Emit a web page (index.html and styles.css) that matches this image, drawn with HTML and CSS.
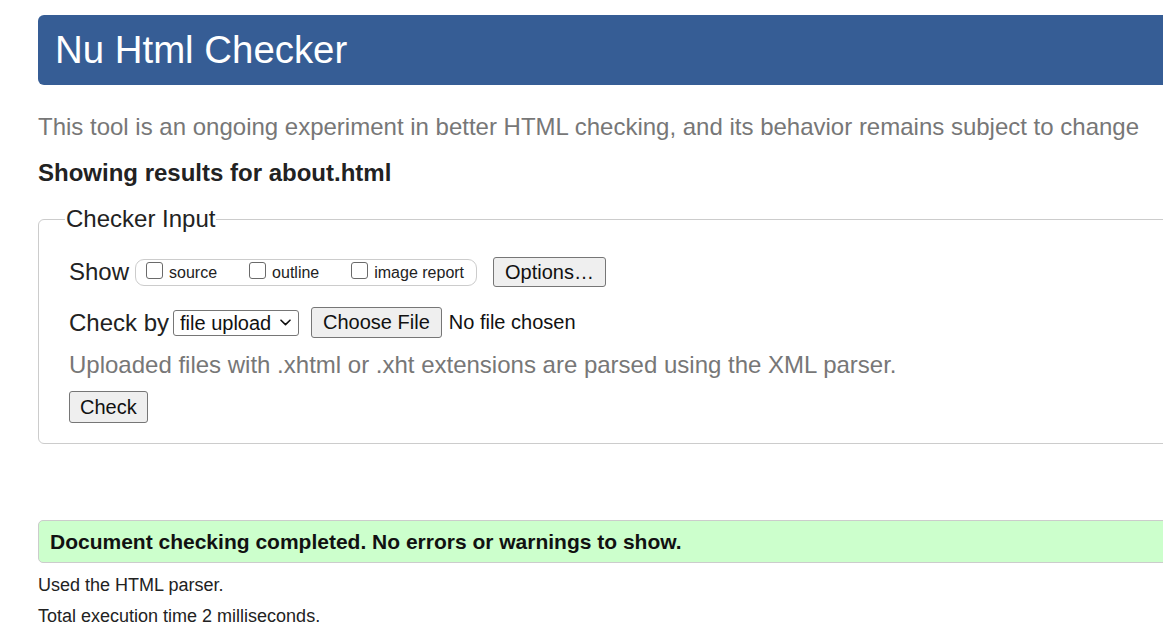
FILE: index.html
```html
<!DOCTYPE html>
<html lang="en">
<head>
<meta charset="utf-8">
<title>Showing results for about.html - Nu Html Checker</title>
<link rel="stylesheet" href="styles.css">
</head>
<body>
<div class="page">
  <h1 class="banner">Nu Html Checker</h1>
  <p class="lede">This tool is an ongoing experiment in better HTML checking, and its behavior remains subject to change</p>
  <p class="results-for">Showing results for about.html</p>
  <fieldset class="input-box">
    <legend class="input-legend">Checker Input</legend>
    <div class="row show-row">
      <span class="row-label">Show</span>
      <span class="show-group">
        <label class="opt"><input type="checkbox" class="cb">source</label>
        <label class="opt"><input type="checkbox" class="cb">outline</label>
        <label class="opt"><input type="checkbox" class="cb">image report</label>
      </span>
      <button class="btn options-btn" type="button">Options…</button>
    </div>
    <div class="row check-row">
      <span class="row-label check-label">Check by</span>
      <span class="sel-wrap">
        <select class="sel"><option>file upload</option></select>
        <svg class="chev" width="11" height="7" viewBox="0 0 11 7" aria-hidden="true"><path d="M1 1.2 L5.5 5.6 L10 1.2" fill="none" stroke="#111" stroke-width="1.6" stroke-linecap="round" stroke-linejoin="round"/></svg>
      </span>
      <button class="btn file-btn" type="button">Choose File</button>
      <span class="no-file">No file chosen</span>
    </div>
    <p class="note">Uploaded files with .xhtml or .xht extensions are parsed using the XML parser.</p>
    <button class="btn check-btn" type="button">Check</button>
  </fieldset>
  <p class="success">Document checking completed. No errors or warnings to show.</p>
  <p class="details first">Used the HTML parser.</p>
  <p class="details">Total execution time 2 milliseconds.</p>
</div>
</body>
</html>
```

FILE: styles.css
```css
html, body {
  margin: 0;
  padding: 0;
  background: #fff;
  overflow: hidden;
}
body {
  font-family: "Liberation Sans", Arial, sans-serif;
  color: #222;
}
.page {
  width: 1200px;
  padding-left: 38px;
  padding-top: 15px;
}
.banner {
  margin: 0;
  height: 70px;
  background: #365d95;
  color: #fff;
  font-weight: normal;
  font-size: 38.4px;
  line-height: 70px;
  padding-left: 17px;
  border-radius: 6px 0 0 6px;
}
.lede {
  margin: 27px 0 0;
  font-size: 24px;
  line-height: 30px;
  color: #777;
}
.results-for {
  margin: 16px 0 0;
  font-size: 24px;
  line-height: 30px;
  font-weight: bold;
  color: #222;
}
.input-box {
  margin: 17px 0 0;
  border: 1px solid #ccc;
  border-radius: 6px;
  padding: 24px 30px 20px;
}
.input-legend {
  font-size: 24px;
  line-height: 28px;
  padding: 0 1px;
  margin-left: -4px;
  color: #222;
}
.row {
  display: flex;
  align-items: center;
}
.row-label {
  font-size: 24px;
  margin-right: 6px;
  color: #222;
}
.check-label {
  margin-right: 4px;
}
.show-group {
  display: inline-flex;
  align-items: center;
  box-sizing: border-box;
  border: 1px solid #ccc;
  border-radius: 9px;
  padding: 0 12px 0 10px;
  height: 27px;
  gap: 32px;
}
.opt {
  font-size: 16px;
  display: inline-flex;
  align-items: center;
  color: #222;
  padding-top: 2px;
}
.cb {
  appearance: none;
  -webkit-appearance: none;
  box-sizing: border-box;
  width: 17px;
  height: 17px;
  border: 1px solid #6a6a6a;
  border-radius: 3px;
  background: #fff;
  margin: 0 6px 6px 0;
}
.btn {
  font-family: "Liberation Sans", Arial, sans-serif;
  font-size: 20px;
  color: #111;
  background: #efefef;
  border: 1px solid #767676;
  border-radius: 3px;
  padding: 0 11px;
}
.options-btn {
  margin-left: 16px;
  height: 30px;
}
.check-row {
  margin-top: 20px;
}
.sel-wrap {
  display: inline-flex;
  align-items: center;
  box-sizing: border-box;
  width: 126px;
  height: 26px;
  border: 1px solid #767676;
  border-radius: 3px;
  background: #fff;
  padding: 0 7px 0 6px;
}
.sel {
  appearance: none;
  -webkit-appearance: none;
  font-family: "Liberation Sans", Arial, sans-serif;
  font-size: 20px;
  flex: 1;
  min-width: 0;
  border: 0;
  padding: 0;
  margin: 0;
  background: transparent;
  color: #111;
  outline: none;
}
.chev {
  display: block;
  flex: none;
}
.file-btn {
  margin-left: 12px;
  height: 31px;
}
.no-file {
  font-size: 20px;
  margin-left: 7px;
  color: #111;
}
.note {
  margin: 12px 0 0;
  font-size: 24px;
  line-height: 30px;
  color: #777;
}
.check-btn {
  display: block;
  margin-top: 11px;
  height: 32px;
  padding: 0 10px;
}
.success {
  margin: 76px 0 0;
  box-sizing: border-box;
  background: #ccffcc;
  border: 1px solid #ccc;
  border-radius: 5px 0 0 5px;
  padding: 0 11px;
  height: 43px;
  line-height: 41px;
  font-size: 21px;
  font-weight: bold;
  color: #111;
}
.details {
  margin: 10px 0 0;
  font-size: 18px;
  line-height: 21px;
  color: #222;
}
.details.first {
  margin-top: 12px;
}
```
